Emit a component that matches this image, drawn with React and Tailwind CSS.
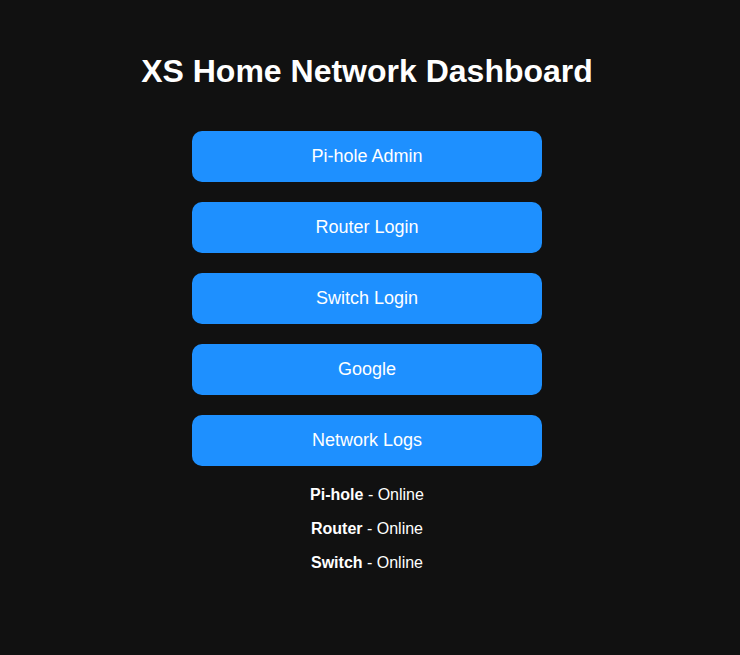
const links = ["Pi-hole Admin", "Router Login", "Switch Login", "Google", "Network Logs"];

const statuses = ["Pi-hole", "Router", "Switch"];

export default function App() {
  return (
    <div
      className="min-h-[655px] w-full bg-[#111111] pr-[6px] text-white"
      style={{ fontFamily: '"Liberation Sans", Arial, sans-serif' }}
    >
      <div className="flex flex-col items-center pt-[53px]">
        <h1 className="text-[32px] leading-[36px] font-bold">XS Home Network Dashboard</h1>

        <div className="mt-[42px] flex flex-col gap-[20px]">
          {links.map((label) => (
            <a
              key={label}
              href="#"
              className="flex h-[51px] w-[350px] items-center justify-center rounded-[10px] bg-[#1e90ff] text-[18px] text-white"
            >
              {label}
            </a>
          ))}
        </div>

        <div className="mt-[20px] flex flex-col gap-[16px] text-[16px] leading-[18px]">
          {statuses.map((name) => (
            <p key={name} className="text-center">
              <strong className="font-bold">{name}</strong> - Online
            </p>
          ))}
        </div>
      </div>
    </div>
  );
}
